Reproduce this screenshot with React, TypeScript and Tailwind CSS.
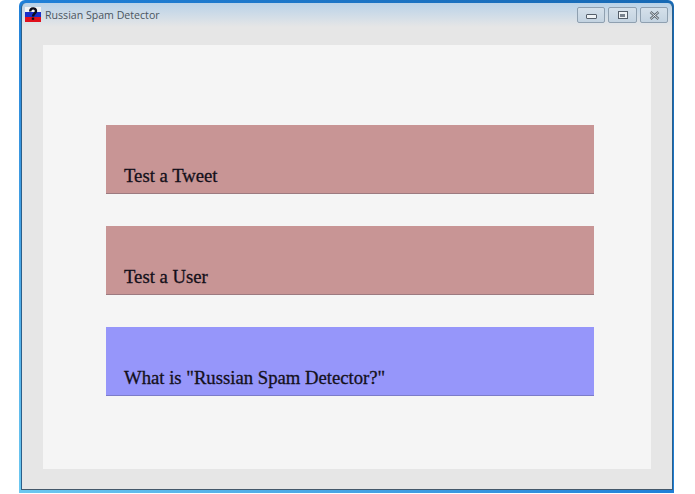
import React from "react";

const buttons = [
  { label: "Test a Tweet", color: "bg-[#c89595]", border: "border-b-[#9c7a80]" },
  { label: "Test a User", color: "bg-[#c89595]", border: "border-b-[#9c7a80]" },
  { label: 'What is "Russian Spam Detector?"', color: "bg-[#9696fa]", border: "border-b-[#7c7cc8]" },
];

const FlagIcon = () => (
  <svg width="16" height="15" viewBox="0 0 16 15" className="shrink-0">
    <rect x="0" y="0" width="16" height="5" fill="#f4f4f4" />
    <rect x="0" y="5" width="16" height="5" fill="#1a2fc8" />
    <rect x="0" y="10" width="16" height="5" fill="#e0101c" />
    <path d="M5.2 4.6 C5.2 0.4 11 0.4 11 4 C11 6.4 8 6.4 8 9.6" stroke="#0d0d1a" strokeWidth="2.4" fill="none" />
    <rect x="6.8" y="10.6" width="2.4" height="2.2" fill="#0d0d1a" />
  </svg>
);

const WinButton = ({ width, children }: { width: string; children: React.ReactNode }) => (
  <div className={`${width} h-[16px] rounded-[2px] border border-[#8fa0b0] bg-gradient-to-b from-[#d5e0ea] to-[#c3d3e1] flex items-center justify-center`}>
    {children}
  </div>
);

export default function App() {
  return (
    <div className="w-[695px] h-[494px] bg-white overflow-hidden pl-[19px]">
      <div className="w-[655px] h-[493px] flex flex-col bg-gradient-to-bl from-[#1769b4] via-[#1f80d8] to-[#6cc8f0] rounded-t-[6px] pl-[2px] pr-[1px] pb-[3px] pt-[3px]">
        <div className="h-[24px] shrink-0 rounded-t-[5px] border-x border-[#2b5f8a] bg-gradient-to-b from-[#b9d2e8] to-[#e6e6e6] flex items-start pt-[4px] pl-[3px] pr-[4px]">
          <FlagIcon />
          <span className="ml-[4px] text-[10.6px] leading-[16px] text-[#4a5560] font-['Open_Sans',sans-serif]">Russian Spam Detector</span>
          <div className="ml-auto flex gap-[3px]">
            <WinButton width="w-[28px]">
              <div className="w-[11px] h-[5px] mt-[3px] rounded-[1px] border border-[#555f6a] bg-[#eef2f5]" />
            </WinButton>
            <WinButton width="w-[29px]">
              <div className="w-[10px] h-[8px] border border-[#555f6a] bg-[#eef2f5] flex items-center justify-center">
                <div className="w-[5px] h-[3px] bg-[#79838e]" />
              </div>
            </WinButton>
            <WinButton width="w-[28px]">
              <svg width="11" height="9" viewBox="0 0 11 9">
                <path d="M1.5 1 L9.5 8 M9.5 1 L1.5 8" stroke="#5a646e" strokeWidth="2.4" fill="none" />
                <path d="M1.5 1 L9.5 8 M9.5 1 L1.5 8" stroke="#eef2f5" strokeWidth="0.9" fill="none" />
              </svg>
            </WinButton>
          </div>
        </div>
        <div className="flex-1 bg-[#e6e6e6] border-x border-b border-x-[#2b5f8a] border-b-[#44586a] pt-[18px] px-[21px] pb-[20px]">
          <div className="h-full bg-[#f5f5f5] flex flex-col gap-[32px] pt-[80px] pl-[63px] pr-[57px]">
            {buttons.map((b) => (
              <div
                key={b.label}
                className={`${b.color} ${b.border} border-b h-[69px] shrink-0 flex items-end pl-[18px] pb-[7px] text-[18.7px] leading-[20px] text-[#14101a] font-['Liberation_Serif',serif] [-webkit-text-stroke:0.3px_#14101a]`}
              >
                {b.label}
              </div>
            ))}
          </div>
        </div>
      </div>
    </div>
  );
}
